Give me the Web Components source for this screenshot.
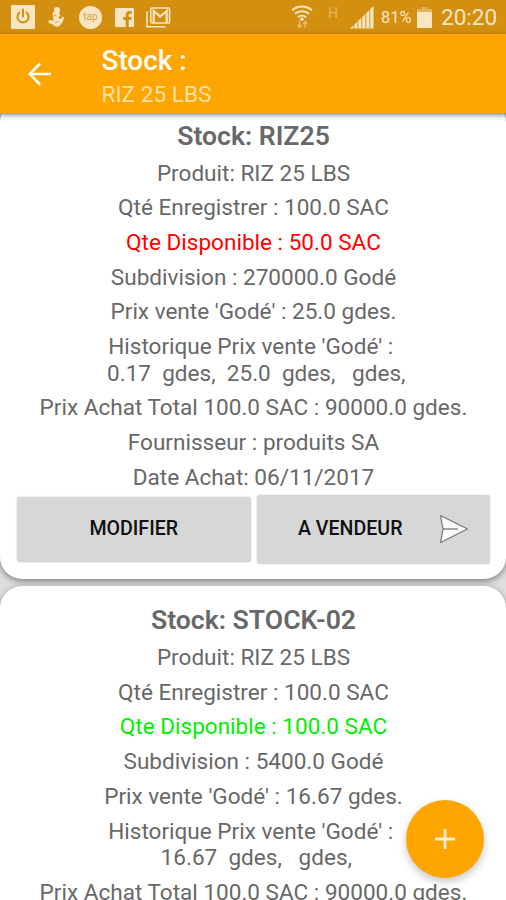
<!DOCTYPE html>
<html lang="fr">
<head>
    <meta charset="UTF-8">
    <meta name="viewport" content="width=device-width, initial-scale=1.0">
    <title>Stock</title>
    <style>
        body {
            margin: 0;
            font-family: Roboto, "Noto Sans", sans-serif;
        }
    </style>
</head>
<body>
    <stock-app></stock-app>

    <script>
        class StatusBar extends HTMLElement {

            constructor() {
                super();
                this.attachShadow({ mode: "open" });
                this.render();
            }

            html() {
                return `
                <div id="left">
                    <svg id="power" width="24" height="24" viewBox="0 0 24 24">
                        <rect width="24" height="24" rx="1" fill="#f8e5c3"/>
                        <path d="M8.500 7.500a5.600 5.600 0 1 0 7 0M12 4.500v7" fill="none" stroke="#d28f10" stroke-width="2" stroke-linecap="round"/>
                    </svg>
                    <svg id="person" width="16" height="20" viewBox="0 0 16 20">
                        <circle cx="9" cy="3" r="3" fill="#f8e5c3"/>
                        <path d="M4.500 5.500l3-1 4 1 .5 3-1.500 2.500 2 1 2.500-2.500 1.300 1-2 5-3.500 4H7.500L5 17.500l-4-1.500-1-2 3-1 3 1-1-3z" fill="#f8e5c3"/>
                        <path d="M5.500 9l3-1M7 16l3.500-2" stroke="#d9a344" stroke-width="1"/>
                    </svg>
                    <div id="tap">tap</div>
                    <svg id="fb" width="19" height="19" viewBox="0 0 19 19">
                        <path d="M1 0h17l1 1v17l-1 1h-4.300v-7h2.500l.4-3h-2.900V7.300c0-1 .4-1.500 1.500-1.500h1.500V3.100l-2-.1c-2.600 0-4 1.400-4 4v2H8.200v3h2.500v7H1l-1-1V1z" fill="#f8e5c3"/>
                    </svg>
                    <svg id="mail" width="25" height="21" viewBox="0 0 25 21">
                        <path d="M1 4.500V19.700H19.500" fill="none" stroke="#f8e5c3" stroke-width="1.600"/>
                        <rect x="4.800" y="1" width="18.800" height="15" rx="1" fill="none" stroke="#f8e5c3" stroke-width="1.500"/>
                        <path d="M7.700 16V4l6.500 5.500 6.500-5.500V16" fill="none" stroke="#f8e5c3" stroke-width="2.200"/>
                    </svg>
                </div>
                <div id="right">
                    <svg id="wifi" width="22" height="24" viewBox="0 0 22 24">
                        <g fill="none" stroke="#f8e5c3" stroke-width="2">
                            <path d="M1 5.200a15 15 0 0 1 20 0"/>
                            <path d="M4 8.800a10.500 10.500 0 0 1 14 0"/>
                            <path d="M7 12.200a6 6 0 0 1 8 0"/>
                        </g>
                        <circle cx="11" cy="14.300" r="1.700" fill="#f8e5c3"/>
                        <path d="M8.500 16v6M6.500 20l2 2.500 2-2.500M14 23v-6M12 19l2-2.500 2 2.500" fill="none" stroke="#e9bf70" stroke-width="1.300"/>
                    </svg>
                    <span id="net">H</span>
                    <svg id="signal" width="24" height="23" viewBox="0 0 24 23">
                        <path d="M0 22.500L3.400 19.300V22.500zM4.300 18.500L7.400 15.500V22.500H4.300zM8.300 14.700L11.400 11.700V22.500H8.300zM12.300 10.900L15.400 7.900V22.500H12.300zM16.300 7.100L19.400 4.200V22.500H16.300zM20.300 3.200L23.500 0V22.500H20.300z" fill="#f8e5c3"/>
                    </svg>
                    <span id="percent">81%</span>
                    <svg id="battery" width="15" height="21" viewBox="0 0 15 21">
                        <path d="M4.500 0h6v2H15v3H0V2h4.500z" fill="#e3b35a"/>
                        <path d="M0 5h15v16H0z" fill="#f8e5c3"/>
                    </svg>
                    <span id="time">20:20</span>
                </div>
                `;
            }

            style() {
                return `
                <style>
                    :host {
                        display: flex;
                        justify-content: space-between;
                        box-sizing: border-box;
                        height: 34px;
                        padding: 0 10px 0 11px;
                        background: #d28f10;
                        color: #f8e5c3;
                    }

                    #left, #right {
                        display: flex;
                        align-items: center;
                    }

                    svg {
                        display: block;
                        flex: none;
                    }

                    #person {
                        margin-left: 13px;
                    }

                    #tap {
                        display: flex;
                        justify-content: center;
                        align-items: center;
                        width: 23px;
                        height: 23px;
                        margin-left: 15px;
                        border-radius: 50%;
                        background: #f8e5c3;
                        color: #d9a344;
                        font-size: 10px;
                        line-height: 10px;
                    }

                    #fb {
                        margin-left: 13px;
                    }

                    #mail {
                        margin-left: 12px;
                    }

                    #net {
                        width: 10px;
                        margin: 0 12px 9px 15px;
                        font-size: 14px;
                        line-height: 14px;
                        color: #e6b661;
                    }

                    #percent {
                        width: 31px;
                        margin-left: 7px;
                        font-size: 16.500px;
                        white-space: nowrap;
                    }

                    #battery {
                        margin-left: 5px;
                    }

                    #time {
                        width: 55px;
                        margin-left: 9px;
                        font-size: 22.500px;
                        white-space: nowrap;
                    }
                </style>
                `;
            }

            render() {
                this.shadowRoot.innerHTML = `
                    ${this.html()}
                    ${this.style()}
                `;
            }

        }

        customElements.define("status-bar", StatusBar);


        class AppHeader extends HTMLElement {

            constructor() {
                super();
                this.attachShadow({ mode: "open" });
                this.render();
            }

            html() {
                return `
                <svg width="24" height="24" viewBox="0 0 24 24">
                    <path d="M23 12H2M12 1.500L1.700 12 12 22.500" fill="none" stroke="#fff" stroke-width="2.500"/>
                </svg>
                <div id="titles">
                    <div id="title"><slot></slot></div>
                    <div id="subtitle"><slot name="subtitle"></slot></div>
                </div>
                `;
            }

            style() {
                return `
                <style>
                    :host {
                        display: flex;
                        align-items: center;
                        box-sizing: border-box;
                        height: 79px;
                        padding-left: 28px;
                        background: #ffa500;
                        box-shadow: 0 2px 5px rgba(0, 0, 0, 0.5);
                    }

                    #titles {
                        margin-left: 49.500px;
                        padding-top: 8px;
                    }

                    #title {
                        font-size: 27.900px;
                        font-weight: 500;
                        line-height: 34px;
                        color: #fff;
                    }

                    #subtitle {
                        font-size: 22.600px;
                        line-height: 33px;
                        color: #ffe0a6;
                    }
                </style>
                `;
            }

            render() {
                this.shadowRoot.innerHTML = `
                    ${this.html()}
                    ${this.style()}
                `;
            }

        }

        customElements.define("app-header", AppHeader);


        class StockButton extends HTMLElement {

            constructor() {
                super();
                this.attachShadow({ mode: "open" });
                this.render();
            }

            style() {
                return `
                <style>
                    :host {
                        display: flex;
                        justify-content: center;
                        align-items: center;
                        box-sizing: border-box;
                        height: 65px;
                        border-radius: 3px;
                        background: #d6d7d7;
                        box-shadow: 0 0 2px rgba(0, 0, 0, 0.2);
                        color: #111;
                        font-size: 19.600px;
                        font-weight: 500;
                        line-height: 24px;
                        white-space: nowrap;
                    }
                </style>
                `;
            }

            render() {
                this.shadowRoot.innerHTML = `
                    <slot></slot>
                    <slot name="icon"></slot>
                    ${this.style()}
                `;
            }

        }

        customElements.define("stock-button", StockButton);


        class StockCard extends HTMLElement {

            constructor() {
                super();
                this.attachShadow({ mode: "open" });
            }

            set stock(stock) {
                this.render(stock);
            }

            html(stock) {
                return `
                <h2>Stock: ${stock.name}</h2>
                <p>Produit: ${stock.product}</p>
                <p>Qté Enregistrer : ${stock.saved} SAC</p>
                <p style="color: ${stock.color}">Qte Disponible : ${stock.available} SAC</p>
                <p>Subdivision : ${stock.subdivision} Godé</p>
                <p>Prix vente 'Godé' : ${stock.price} gdes.</p>
                <p>Historique Prix vente 'Godé' : <br> ${stock.history}</p>
                <p>Prix Achat Total ${stock.saved} SAC : ${stock.total} gdes.</p>
                ${stock.supplier ? `
                <p>Fournisseur : ${stock.supplier}</p>
                <p>Date Achat: ${stock.date}</p>
                <div id="buttons">
                    <stock-button>MODIFIER</stock-button>
                    <stock-button id="send">A VENDEUR
                        <svg slot="icon" width="30" height="30" viewBox="0 0 30 30">
                            <path d="M1.500 1.500L28.500 15 1.500 28.500 4 15z" fill="#fafafa" stroke="#777" stroke-width="1.200" stroke-linejoin="round"/>
                            <path d="M4 15H19" stroke="#777" stroke-width="1.300"/>
                        </svg>
                    </stock-button>
                </div>
                ` : ""}
                `;
            }

            style() {
                return `
                <style>
                    :host {
                        display: flex;
                        flex-direction: column;
                        gap: 8px;
                        flex: none;
                        box-sizing: border-box;
                        height: 478px;
                        padding: 18.500px 16px 0 17px;
                        border-radius: 22px;
                        background: #fff;
                        box-shadow: 0 2px 6px rgba(0, 0, 0, 0.45);
                        color: #686868;
                        text-align: center;
                    }

                    h2, p {
                        margin: 0;
                        white-space: pre;
                    }

                    h2 {
                        margin-bottom: 1px;
                        font-size: 26.600px;
                        font-weight: 600;
                        line-height: 32px;
                    }

                    p {
                        font-size: 22.560px;
                        line-height: 26.700px;
                    }

                    #buttons {
                        display: grid;
                        grid-template-columns: 1fr 1fr;
                        align-items: center;
                        gap: 6px;
                        margin-top: -5px;
                    }

                    #send {
                        height: 69px;
                        padding-left: 20px;
                    }

                    #send svg {
                        margin-left: 36px;
                    }
                </style>
                `;
            }

            render(stock) {
                this.shadowRoot.innerHTML = `
                    ${this.html(stock)}
                    ${this.style()}
                `;
            }

        }

        customElements.define("stock-card", StockCard);


        class AddButton extends HTMLElement {

            constructor() {
                super();
                this.attachShadow({ mode: "open" });
                this.render();
            }

            style() {
                return `
                <style>
                    :host {
                        display: flex;
                        justify-content: center;
                        align-items: center;
                        width: 78px;
                        height: 78px;
                        border-radius: 50%;
                        background: #ffa500;
                        box-shadow: 0 4px 9px rgba(0, 0, 0, 0.22);
                    }
                </style>
                `;
            }

            render() {
                this.shadowRoot.innerHTML = `
                    <svg width="20" height="20" viewBox="0 0 20 20">
                        <path d="M10 0V20M0 10H20" stroke="#fff0d5" stroke-width="2.800"/>
                    </svg>
                    ${this.style()}
                `;
            }

        }

        customElements.define("add-button", AddButton);


        class StockApp extends HTMLElement {

            constructor() {
                super();
                this.attachShadow({ mode: "open" });
                this.render();
            }

            stocks() {
                return [
                    {
                        name: "RIZ25",
                        product: "RIZ 25 LBS",
                        saved: "100.0",
                        available: "50.0",
                        color: "#ff0000",
                        subdivision: "270000.0",
                        price: "25.0",
                        history: "0.17  gdes,  25.0  gdes,   gdes,",
                        total: "90000.0",
                        supplier: "produits SA",
                        date: "06/11/2017"
                    },
                    {
                        name: "STOCK-02",
                        product: "RIZ 25 LBS",
                        saved: "100.0",
                        available: "100.0",
                        color: "#00f000",
                        subdivision: "5400.0",
                        price: "16.67",
                        history: "16.67  gdes,   gdes,",
                        total: "90000.0"
                    }
                ];
            }

            html() {
                return `
                <status-bar></status-bar>
                <app-header>Stock :<span slot="subtitle">RIZ 25 LBS</span></app-header>
                <main></main>
                <add-button></add-button>
                `;
            }

            style() {
                return `
                <style>
                    :host {
                        display: flex;
                        flex-direction: column;
                        position: relative;
                        height: 900px;
                        overflow: hidden;
                        background: #dedede;
                    }

                    status-bar, app-header {
                        flex: none;
                        position: relative;
                        z-index: 1;
                    }

                    /* the list is scrolled a little under the header */
                    main {
                        display: flex;
                        flex-direction: column;
                        gap: 6.500px;
                        margin-top: -12px;
                    }

                    add-button {
                        position: absolute;
                        right: 22px;
                        bottom: 22px;
                    }
                </style>
                `;
            }

            render() {
                this.shadowRoot.innerHTML = `
                    ${this.html()}
                    ${this.style()}
                `;

                const main = this.shadowRoot.querySelector("main");
                this.stocks().forEach(stock => {
                    const card = document.createElement("stock-card");
                    card.stock = stock;
                    main.append(card);
                });
            }

        }

        customElements.define("stock-app", StockApp);
    </script>
</body>
</html>
